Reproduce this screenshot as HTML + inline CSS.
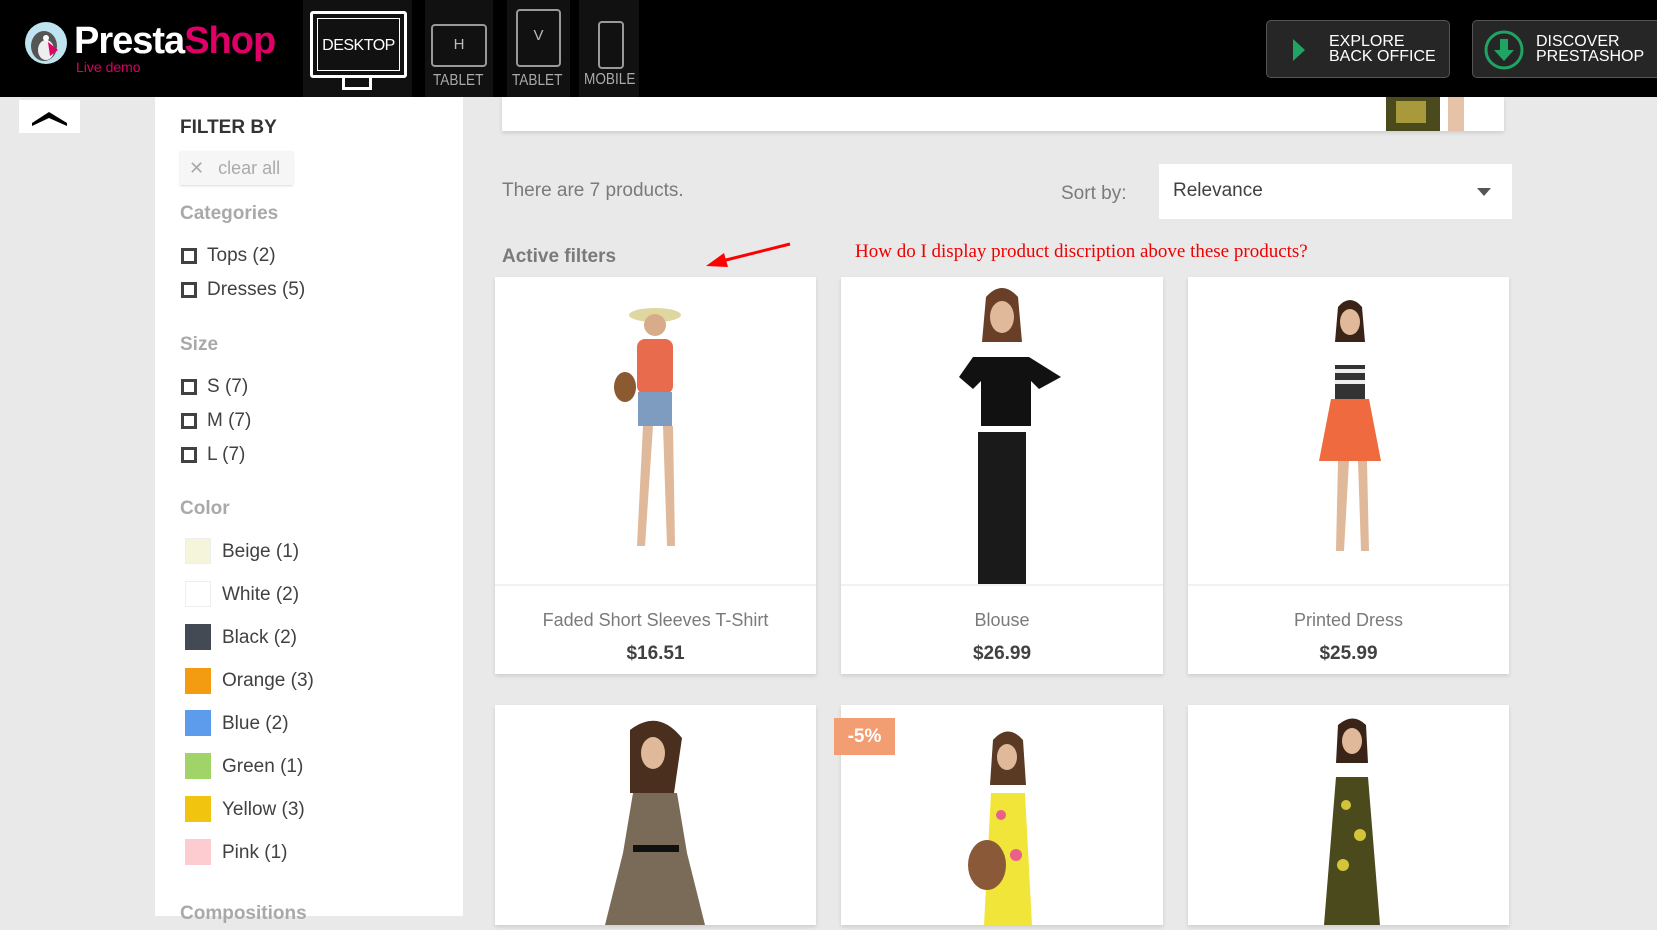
<!DOCTYPE html>
<html><head><meta charset="utf-8"><style>
*{margin:0;padding:0;box-sizing:border-box}
body{width:1657px;height:916px;overflow:hidden;background:#e9e9e9;font-family:"Liberation Sans","DejaVu Sans",sans-serif;position:relative;color:#414141}
.a{position:absolute}
#hdr{left:0;top:0;width:1657px;height:97px;background:#000}
.dev{background:#111;top:0;height:97px}
.btn{top:20px;height:58px;border:1px solid #555;border-radius:5px;background:#262626;color:#fff;font-size:16px;line-height:15px}
#side{left:155px;top:97px;width:308px;height:819px;background:#fff}
.h{font-weight:bold;color:#a9a9a9;font-size:19px}
.cb{width:16px;height:16px;border:3px solid #414141;left:181px}
.lbl{left:207px;font-size:19px;color:#414141}
.sw{left:185px;width:26px;height:26px}
.sl{left:222px;font-size:19px;color:#414141}
.card{background:#fff;box-shadow:0 2px 4px rgba(0,0,0,.12)}
.nm{width:100%;text-align:center;font-size:18px;color:#7a7a7a}
.pr{width:100%;text-align:center;font-size:19px;font-weight:bold;color:#414141}
.dl{color:#aaa;font-size:16px;transform:scaleX(.85);transform-origin:left}
</style></head><body>
<div id="hdr" class="a"></div>
<svg class="a" style="left:24px;top:20px" width="44" height="46" viewBox="0 0 44 46"><circle cx="22" cy="23" r="21" fill="#bfe3ef"/><ellipse cx="20" cy="26" rx="13" ry="15" fill="#555"/><ellipse cx="22" cy="30" rx="8" ry="10" fill="#eee"/><path d="M24 22 L34 30 L26 36 Z" fill="#df0067"/><circle cx="22" cy="18" r="3" fill="#fff"/></svg>
<div class="a" style="left:74px;top:20px;font-size:38px;font-weight:bold;color:#fff;letter-spacing:-1px">Presta<span style="color:#df0067">Shop</span></div>
<div class="a" style="left:76px;top:59px;font-size:14px;color:#df0067">Live demo</div>
<div class="a dev" style="left:303px;width:109px"></div>
<div class="a" style="left:310px;top:11px;width:97px;height:67px;border:3px solid #fff;border-radius:3px"><div style="margin:4px;border:1px solid #fff;height:53px;color:#fff;font-size:16px;text-align:center;line-height:53px;letter-spacing:-0.5px">DESKTOP</div></div>
<div class="a" style="left:342px;top:78px;width:30px;height:12px;border:3px solid #fff;border-top:none"></div>
<div class="a dev" style="left:425px;width:68px"></div>
<div class="a" style="left:431px;top:24px;width:56px;height:43px;border:2px solid #999;border-radius:4px;color:#bbb;text-align:center;line-height:38px;font-size:15px">H</div>
<div class="a dl" style="left:433px;top:72px">TABLET</div>
<div class="a dev" style="left:507px;width:63px"></div>
<div class="a" style="left:516px;top:9px;width:45px;height:58px;border:2px solid #999;border-radius:4px;color:#bbb;text-align:center;line-height:50px;font-size:15px">V</div>
<div class="a dl" style="left:512px;top:72px">TABLET</div>
<div class="a dev" style="left:579px;width:60px"></div>
<div class="a" style="left:598px;top:21px;width:26px;height:48px;border:2px solid #999;border-radius:4px"></div>
<div class="a dl" style="left:584px;top:71px">MOBILE</div>
<div class="a btn" style="left:1266px;width:184px"><svg class="a" style="left:26px;top:18px" width="14" height="22"><path d="M0 0 L12 11 L0 22Z" fill="#1fa463"/></svg><div class="a" style="left:62px;top:13px">EXPLORE<br>BACK OFFICE</div></div>
<div class="a btn" style="left:1472px;width:190px"><svg class="a" style="left:10px;top:8px" width="42" height="42"><circle cx="21" cy="21" r="18" fill="none" stroke="#1fa463" stroke-width="3"/><path d="M17 10h8v11h6l-10 11-10-11h6z" fill="#1fa463"/></svg><div class="a" style="left:63px;top:13px">DISCOVER<br>PRESTASHOP</div></div>
<div class="a" style="left:19px;top:100px;width:61px;height:33px;background:#fff"><svg width="61" height="33"><path d="M13 23 L30 12 L48 23 L48 26 L30 18 L13 26Z" fill="#000"/></svg></div>
<div id="side" class="a"></div>
<div class="a" style="left:180px;top:117px;font-size:19px;font-weight:bold;color:#333">FILTER BY</div>
<div class="a" style="left:180px;top:151px;width:113px;height:34px;background:#f6f6f6;box-shadow:0 1px 2px rgba(0,0,0,.15);color:#aaa;font-size:18px;line-height:34px"><span style="margin-left:9px">✕</span><span style="margin-left:14px">clear all</span></div>
<div class="a h" style="left:180px;top:203px">Categories</div>
<div class="a cb" style="top:248px"></div><div class="a lbl" style="top:245px">Tops (2)</div>
<div class="a cb" style="top:282px"></div><div class="a lbl" style="top:279px">Dresses (5)</div>
<div class="a h" style="left:180px;top:334px">Size</div>
<div class="a cb" style="top:379px"></div><div class="a lbl" style="top:376px">S (7)</div>
<div class="a cb" style="top:413px"></div><div class="a lbl" style="top:410px">M (7)</div>
<div class="a cb" style="top:447px"></div><div class="a lbl" style="top:444px">L (7)</div>
<div class="a h" style="left:180px;top:498px">Color</div>
<div class="a sw" style="top:538px;background:#f5f5dc;border:1px solid #eee"></div><div class="a sl" style="top:541px">Beige (1)</div>
<div class="a sw" style="top:581px;background:#fff;border:1px solid #eee"></div><div class="a sl" style="top:584px">White (2)</div>
<div class="a sw" style="top:624px;background:#434a54"></div><div class="a sl" style="top:627px">Black (2)</div>
<div class="a sw" style="top:668px;background:#f39c11"></div><div class="a sl" style="top:670px">Orange (3)</div>
<div class="a sw" style="top:710px;background:#5d9cec"></div><div class="a sl" style="top:713px">Blue (2)</div>
<div class="a sw" style="top:753px;background:#a0d468"></div><div class="a sl" style="top:756px">Green (1)</div>
<div class="a sw" style="top:796px;background:#f1c40f"></div><div class="a sl" style="top:799px">Yellow (3)</div>
<div class="a sw" style="top:839px;background:#fcccd0"></div><div class="a sl" style="top:842px">Pink (1)</div>
<div class="a h" style="left:180px;top:903px">Compositions</div>
<div class="a card" style="left:502px;top:97px;width:1002px;height:34px"><svg class="a" style="left:860px;top:0" width="110" height="34"><path d="M24 0h54v34H24z" fill="#4a4a1c"/><path d="M34 4h30v22H34z" fill="#a89a3a"/><path d="M86 0h16v34H86z" fill="#e6c2a8"/></svg></div>
<div class="a" style="left:502px;top:180px;font-size:19px;color:#7a7a7a">There are 7 products.</div>
<div class="a" style="left:1061px;top:183px;font-size:19px;color:#7a7a7a">Sort by:</div>
<div class="a" style="left:1159px;top:164px;width:353px;height:55px;background:#fff"><div class="a" style="left:14px;top:16px;font-size:19px;color:#414141">Relevance</div><svg class="a" style="left:318px;top:24px" width="14" height="8"><path d="M0 0h14L7 8z" fill="#555"/></svg></div>
<div class="a" style="left:502px;top:246px;font-size:19px;font-weight:bold;color:#7a7a7a">Active filters</div>
<svg class="a" style="left:700px;top:236px" width="100" height="35"><path d="M90 8 L22 25" stroke="#f00" stroke-width="3"/><path d="M6 30 L24 17 L28 31Z" fill="#f00"/></svg>
<div class="a" style="left:855px;top:241px;font-family:'Liberation Serif',serif;font-size:19px;color:#e00">How do I display product discription above these products?</div>

<div class="a card" style="left:495px;top:277px;width:321px;height:397px"><svg class="a" style="left:0;top:0" width="321" height="307"><ellipse cx="160" cy="38" rx="26" ry="7" fill="#e0d7a0"/><circle cx="160" cy="48" r="11" fill="#d8ac8a"/><rect x="142" y="62" width="36" height="55" rx="8" fill="#e86b4e"/><ellipse cx="130" cy="110" rx="11" ry="15" fill="#8b5a30"/><rect x="143" y="115" width="34" height="34" fill="#7d9cc0"/><path d="M148 149l-6 120h8l8-120zm20 0l4 120h8l-2-120z" fill="#e0b89a"/></svg><div class="a" style="left:0;top:307px;width:321px;height:2px;background:#f2f2f2"></div><div class="a nm" style="top:333px">Faded Short Sleeves T-Shirt</div><div class="a pr" style="top:366px">$16.51</div></div>
<div class="a card" style="left:841px;top:277px;width:322px;height:397px"><svg class="a" style="left:0;top:0" width="322" height="307"><path d="M145 20q16-18 32 0l4 45h-40z" fill="#6a3f28"/><ellipse cx="161" cy="40" rx="12" ry="16" fill="#e0b89a"/><path d="M132 80h56l32 20-22 12-8-8v45h-50v-45l-8 8-14-12z" fill="#111"/><rect x="137" y="155" width="48" height="152" fill="#1a1a1a"/></svg><div class="a" style="left:0;top:307px;width:322px;height:2px;background:#f2f2f2"></div><div class="a nm" style="top:333px">Blouse</div><div class="a pr" style="top:366px">$26.99</div></div>
<div class="a card" style="left:1188px;top:277px;width:321px;height:397px"><svg class="a" style="left:0;top:0" width="321" height="307"><path d="M150 30q12-14 24 0l3 35h-30z" fill="#3a2418"/><ellipse cx="162" cy="45" rx="10" ry="13" fill="#e0b89a"/><rect x="147" y="88" width="30" height="34" fill="#333"/><rect x="147" y="92" width="30" height="4" fill="#eee"/><rect x="147" y="103" width="30" height="4" fill="#eee"/><path d="M143 122h38l12 62h-62z" fill="#f06a3f"/><path d="M150 184l-2 90h8l5-90zm20 0l3 90h8l-2-90z" fill="#e0b89a"/></svg><div class="a" style="left:0;top:307px;width:321px;height:2px;background:#f2f2f2"></div><div class="a nm" style="top:333px">Printed Dress</div><div class="a pr" style="top:366px">$25.99</div></div>

<div class="a card" style="left:495px;top:705px;width:321px;height:220px"><svg width="321" height="220"><path d="M135 25q28-22 52 8l-8 55h-44z" fill="#4a2e1e"/><ellipse cx="158" cy="48" rx="12" ry="16" fill="#e0b89a"/><path d="M138 88h44l10 60 18 72h-100l18-72z" fill="#7a6a58"/><rect x="138" y="140" width="46" height="7" fill="#111"/></svg></div>
<div class="a card" style="left:841px;top:705px;width:322px;height:220px"><svg width="322" height="220"><path d="M152 35q15-17 30 0l3 45h-36z" fill="#5a3a24"/><ellipse cx="166" cy="52" rx="10" ry="13" fill="#e0b89a"/><path d="M150 88h34l7 132h-48z" fill="#f2e53a"/><circle cx="160" cy="110" r="5" fill="#e9608a"/><circle cx="175" cy="150" r="6" fill="#e9608a"/><ellipse cx="146" cy="160" rx="19" ry="25" fill="#8a5a38"/></svg></div>
<div class="a" style="left:834px;top:718px;width:61px;height:37px;background:#f39d72;color:#fff;font-weight:bold;font-size:19px;text-align:center;line-height:37px">-5%</div>
<div class="a card" style="left:1188px;top:705px;width:321px;height:220px"><svg width="321" height="220"><path d="M150 20q15-13 28 0l2 38h-32z" fill="#3a2418"/><ellipse cx="164" cy="36" rx="10" ry="13" fill="#e0b89a"/><path d="M148 72h32l12 148h-56z" fill="#4a4a1c"/><circle cx="158" cy="100" r="5" fill="#d4c43a"/><circle cx="172" cy="130" r="6" fill="#d4c43a"/><circle cx="155" cy="160" r="6" fill="#d4c43a"/></svg></div>
</body></html>
